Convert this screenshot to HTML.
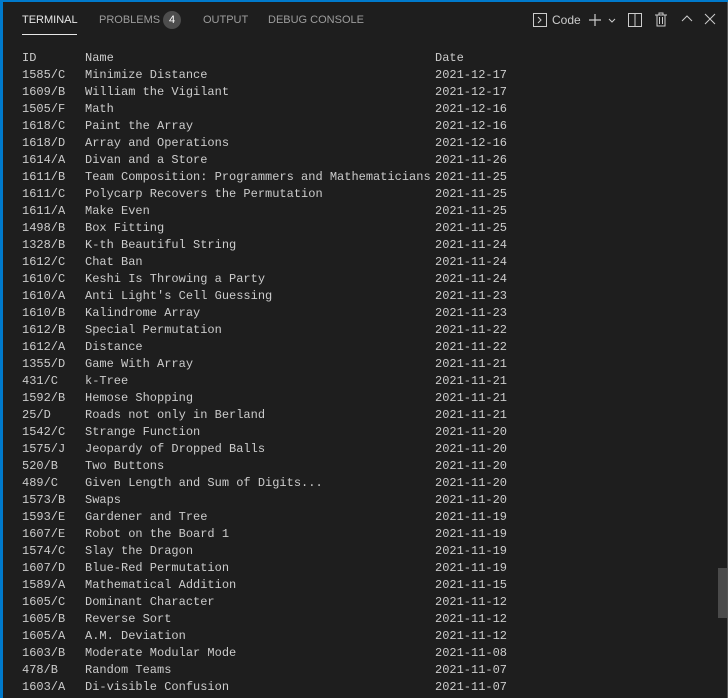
<!DOCTYPE html>
<html><head><style>
body{margin:0;width:728px;height:698px;background:#1e1e1e;overflow:hidden;position:relative;font-family:"Liberation Sans",sans-serif}
.bt{position:absolute;left:0;top:0;width:728px;height:2px;background:#007acc}
.bl{position:absolute;left:0;top:0;width:3px;height:698px;background:#007acc}
.br{position:absolute;right:0;top:2px;width:1px;height:696px;background:#555}
.tab{position:absolute;top:14px;font-size:11px;color:#9d9d9d;letter-spacing:0}
.badge{position:absolute;left:163px;top:11px;width:18px;height:18px;border-radius:9px;background:#4d4d4d;color:#fff;font-size:11px;text-align:center;line-height:18px}
.ul{position:absolute;left:22px;top:34px;width:55px;height:1px;background:#e7e7e7}
.rows{position:absolute;left:0;top:50px;font-family:"Liberation Mono",monospace;font-size:12px;color:#cccccc}
.r{position:relative;height:17px;line-height:17px;white-space:pre}
.r span{position:absolute}
.a{left:22px}.b{left:85px}.c{left:435px}
.sb{position:absolute;left:718px;top:568px;width:9px;height:50px;background:#4a4a4a}
svg{position:absolute}
</style></head><body>
<div class="bt"></div><div class="bl"></div><div class="br"></div>
<div class="tab" style="left:22px;color:#e7e7e7">TERMINAL</div>
<div class="tab" style="left:99px">PROBLEMS</div>
<div class="badge">4</div>
<div class="tab" style="left:203px">OUTPUT</div>
<div class="tab" style="left:268px">DEBUG CONSOLE</div>
<div class="ul"></div>
<svg style="left:533px;top:13px" width="14" height="14" viewBox="0 0 14 14"><rect x="0.5" y="0.5" width="13" height="13" fill="none" stroke="#ccc"/><path d="M5 4l3 3-3 3" fill="none" stroke="#ccc"/></svg>
<div class="tab" style="left:552px;top:13px;color:#ccc;font-size:12px">Code</div>
<svg style="left:588px;top:13px" width="30" height="14" viewBox="0 0 30 14"><path d="M7 1v12M1 7h12" stroke="#ccc" stroke-width="1.2"/><path d="M21 6l3 3 3-3" fill="none" stroke="#ccc"/></svg>
<svg style="left:628px;top:13px" width="14" height="14" viewBox="0 0 14 14"><rect x="0.5" y="0.5" width="13" height="13" fill="none" stroke="#ccc"/><path d="M7 1v12" stroke="#ccc"/></svg>
<svg style="left:654px;top:12px" width="14" height="15" viewBox="0 0 14 15"><path d="M1 3h12M5 3V1h4v2M3 3v11h8V3M5.5 5v7M8.5 5v7" fill="none" stroke="#ccc"/></svg>
<svg style="left:681px;top:14px" width="12" height="10" viewBox="0 0 12 10"><path d="M1 7l5-5 5 5" fill="none" stroke="#ccc"/></svg>
<svg style="left:704px;top:13px" width="12" height="12" viewBox="0 0 12 12"><path d="M1 1l10 10M11 1L1 11" stroke="#ccc"/></svg>
<div class="rows">
<div class="r"><span class="a">ID</span><span class="b">Name</span><span class="c">Date</span></div>
<div class="r"><span class="a">1585/C</span><span class="b">Minimize Distance</span><span class="c">2021-12-17</span></div>
<div class="r"><span class="a">1609/B</span><span class="b">William the Vigilant</span><span class="c">2021-12-17</span></div>
<div class="r"><span class="a">1505/F</span><span class="b">Math</span><span class="c">2021-12-16</span></div>
<div class="r"><span class="a">1618/C</span><span class="b">Paint the Array</span><span class="c">2021-12-16</span></div>
<div class="r"><span class="a">1618/D</span><span class="b">Array and Operations</span><span class="c">2021-12-16</span></div>
<div class="r"><span class="a">1614/A</span><span class="b">Divan and a Store</span><span class="c">2021-11-26</span></div>
<div class="r"><span class="a">1611/B</span><span class="b">Team Composition: Programmers and Mathematicians</span><span class="c">2021-11-25</span></div>
<div class="r"><span class="a">1611/C</span><span class="b">Polycarp Recovers the Permutation</span><span class="c">2021-11-25</span></div>
<div class="r"><span class="a">1611/A</span><span class="b">Make Even</span><span class="c">2021-11-25</span></div>
<div class="r"><span class="a">1498/B</span><span class="b">Box Fitting</span><span class="c">2021-11-25</span></div>
<div class="r"><span class="a">1328/B</span><span class="b">K-th Beautiful String</span><span class="c">2021-11-24</span></div>
<div class="r"><span class="a">1612/C</span><span class="b">Chat Ban</span><span class="c">2021-11-24</span></div>
<div class="r"><span class="a">1610/C</span><span class="b">Keshi Is Throwing a Party</span><span class="c">2021-11-24</span></div>
<div class="r"><span class="a">1610/A</span><span class="b">Anti Light's Cell Guessing</span><span class="c">2021-11-23</span></div>
<div class="r"><span class="a">1610/B</span><span class="b">Kalindrome Array</span><span class="c">2021-11-23</span></div>
<div class="r"><span class="a">1612/B</span><span class="b">Special Permutation</span><span class="c">2021-11-22</span></div>
<div class="r"><span class="a">1612/A</span><span class="b">Distance</span><span class="c">2021-11-22</span></div>
<div class="r"><span class="a">1355/D</span><span class="b">Game With Array</span><span class="c">2021-11-21</span></div>
<div class="r"><span class="a">431/C</span><span class="b">k-Tree</span><span class="c">2021-11-21</span></div>
<div class="r"><span class="a">1592/B</span><span class="b">Hemose Shopping</span><span class="c">2021-11-21</span></div>
<div class="r"><span class="a">25/D</span><span class="b">Roads not only in Berland</span><span class="c">2021-11-21</span></div>
<div class="r"><span class="a">1542/C</span><span class="b">Strange Function</span><span class="c">2021-11-20</span></div>
<div class="r"><span class="a">1575/J</span><span class="b">Jeopardy of Dropped Balls</span><span class="c">2021-11-20</span></div>
<div class="r"><span class="a">520/B</span><span class="b">Two Buttons</span><span class="c">2021-11-20</span></div>
<div class="r"><span class="a">489/C</span><span class="b">Given Length and Sum of Digits...</span><span class="c">2021-11-20</span></div>
<div class="r"><span class="a">1573/B</span><span class="b">Swaps</span><span class="c">2021-11-20</span></div>
<div class="r"><span class="a">1593/E</span><span class="b">Gardener and Tree</span><span class="c">2021-11-19</span></div>
<div class="r"><span class="a">1607/E</span><span class="b">Robot on the Board 1</span><span class="c">2021-11-19</span></div>
<div class="r"><span class="a">1574/C</span><span class="b">Slay the Dragon</span><span class="c">2021-11-19</span></div>
<div class="r"><span class="a">1607/D</span><span class="b">Blue-Red Permutation</span><span class="c">2021-11-19</span></div>
<div class="r"><span class="a">1589/A</span><span class="b">Mathematical Addition</span><span class="c">2021-11-15</span></div>
<div class="r"><span class="a">1605/C</span><span class="b">Dominant Character</span><span class="c">2021-11-12</span></div>
<div class="r"><span class="a">1605/B</span><span class="b">Reverse Sort</span><span class="c">2021-11-12</span></div>
<div class="r"><span class="a">1605/A</span><span class="b">A.M. Deviation</span><span class="c">2021-11-12</span></div>
<div class="r"><span class="a">1603/B</span><span class="b">Moderate Modular Mode</span><span class="c">2021-11-08</span></div>
<div class="r"><span class="a">478/B</span><span class="b">Random Teams</span><span class="c">2021-11-07</span></div>
<div class="r"><span class="a">1603/A</span><span class="b">Di-visible Confusion</span><span class="c">2021-11-07</span></div>
</div>
<div class="sb"></div>
</body></html>
